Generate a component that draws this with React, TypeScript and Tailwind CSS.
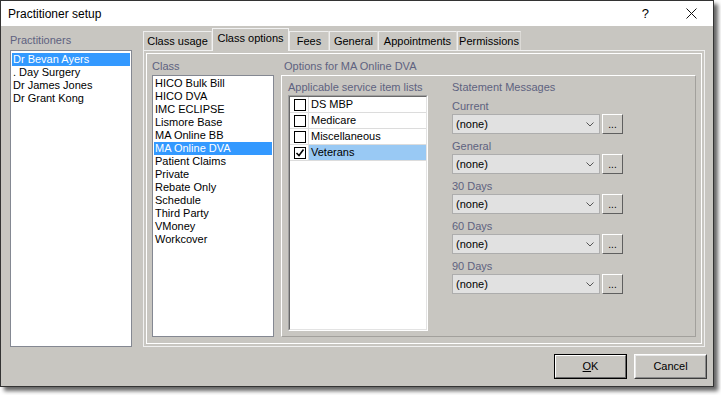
import React from 'react';

const practitioners = ['Dr Bevan Ayers', '. Day Surgery', 'Dr James Jones', 'Dr Grant Kong'];

const classes = [
  'HICO Bulk Bill',
  'HICO DVA',
  'IMC ECLIPSE',
  'Lismore Base',
  'MA Online BB',
  'MA Online DVA',
  'Patient Claims',
  'Private',
  'Rebate Only',
  'Schedule',
  'Third Party',
  'VMoney',
  'Workcover',
];

const tabs = [
  { name: 'Class usage', w: 'w-[69px]' },
  { name: 'Class options', w: 'w-[77px]' },
  { name: 'Fees', w: 'w-[40px]' },
  { name: 'General', w: 'w-[49px]' },
  { name: 'Appointments', w: 'w-[79px]' },
  { name: 'Permissions', w: 'w-[64px]' },
];

const serviceLists: { name: string; checked: boolean }[] = [
  { name: 'DS MBP', checked: false },
  { name: 'Medicare', checked: false },
  { name: 'Miscellaneous', checked: false },
  { name: 'Veterans', checked: true },
];

const messages = ['Current', 'General', '30 Days', '60 Days', '90 Days'];

const Combo: React.FC<{ label: string }> = ({ label }) => (
  <>
    <div className="h-[20px] pt-[4px] flex items-center text-[#5e6280] leading-[13px]">{label}</div>
    <div className="flex h-[20px] gap-[2px]">
      <div className="w-[148px] h-[20px] border border-[#adadad] bg-[#e1e1e1] flex items-center justify-between pl-[3px] pr-[5px] pt-[1px]">
        <span className="leading-[13px]">(none)</span>
        <svg width="8" height="5" viewBox="0 0 8 5">
          <polyline points="0.5,0.5 4,4 7.5,0.5" fill="none" stroke="#555" strokeWidth="1" />
        </svg>
      </div>
      <div className="w-[21px] h-[20px] border border-t-white border-l-white border-b-[#5f5f5f] border-r-[#5f5f5f] bg-[#cdcbc6] flex items-end justify-center pb-[3px] text-[10px] leading-[10px]">
        ...
      </div>
    </div>
  </>
);

export default function App() {
  return (
    <div className="w-[721px] h-[395px] bg-white font-['Liberation_Sans',Arial,sans-serif] text-[11px] text-black">
      <div className="w-[714px] h-[387px] border border-[#333] bg-[#c8c6c1] flex flex-col shadow-[4px_4px_4px_rgba(0,0,0,0.6)]">
        {/* title bar */}
        <div className="h-[25px] bg-white flex items-center justify-between pl-[7px] pr-[16px] shrink-0">
          <span className="text-[12px] leading-[14px]">Practitioner setup</span>
          <div className="flex items-center gap-[37px]">
            <span className="text-[13px] leading-[14px]">?</span>
            <svg width="11" height="11" viewBox="0 0 11 11">
              <path d="M0.5 0.5 L10.5 10.5 M10.5 0.5 L0.5 10.5" stroke="#111" strokeWidth="1" />
            </svg>
          </div>
        </div>

        {/* body */}
        <div className="flex">
          <div className="ml-[9px] w-[122px] flex flex-col">
            <div className="h-[24px] flex items-end pb-[3px] text-[#5e6280] leading-[13px]">Practitioners</div>
            <div className="h-[297px] border border-[#848892] bg-white p-[1px] pt-[2px]">
              {practitioners.map((p, i) => (
                <div
                  key={p}
                  className={`h-[13px] leading-[13px] pl-[1px] ${i === 0 ? 'bg-[#3399ff] text-white' : ''}`}
                >
                  {p}
                </div>
              ))}
            </div>
          </div>

          <div className="ml-[11px] w-[562px] flex flex-col">
            {/* tab strip */}
            <div className="h-[24px] flex items-end">
              {tabs.map((t, i) =>
                i === 1 ? (
                  <div
                    key={t.name}
                    className={`${t.w} h-[23px] -mb-[1px] relative z-10 border border-b-0 border-[#f2f2f2] bg-[#c8c6c1] flex items-center justify-center pb-[3px] leading-[13px]`}
                  >
                    {t.name}
                  </div>
                ) : (
                  <div
                    key={t.name}
                    className={`${t.w} h-[19px] border border-b-0 border-t-[#eeeeee] border-l-[#eeeeee] border-r-[#dcdad6] bg-[#cac8c3] flex items-center justify-center pt-[1px] leading-[13px]`}
                  >
                    {t.name}
                  </div>
                ),
              )}
            </div>

            {/* tab panel */}
            <div className="h-[297px] border border-[#f0f0f0] p-[2px]">
              <div className="h-full border border-white flex pl-[5px]">
                <div className="w-[122px] flex flex-col">
                  <div className="h-[21px] flex items-end pb-[2px] text-[#5e6280] leading-[13px]">Class</div>
                  <div className="h-[262px] border border-[#848892] bg-white p-[1px]">
                    {classes.map((c) => (
                      <div
                        key={c}
                        className={`h-[13px] leading-[13px] pl-[1px] ${c === 'MA Online DVA' ? 'bg-[#3399ff] text-white' : ''}`}
                      >
                        {c}
                      </div>
                    ))}
                  </div>
                </div>

                <div className="ml-[7px] w-[415px] flex flex-col">
                  <div className="h-[21px] flex items-end pb-[2px] pl-[3px] text-[#5e6280] leading-[13px]">
                    Options for MA Online DVA
                  </div>
                  <div className="h-[262px] border border-t-white border-l-white border-b-[#a2a09c] border-r-[#a2a09c] flex pl-[6px]">
                    <div className="w-[140px] flex flex-col">
                      <div className="h-[19px] flex items-end pb-[1px] text-[#5e6280] leading-[13px]">
                        Applicable service item lists
                      </div>
                      <div className="h-[236px] border border-t-[#a0a0a0] border-l-[#a0a0a0] border-b-white border-r-white">
                        <div className="h-full border border-t-[#696969] border-l-[#696969] border-b-[#e3e3e3] border-r-[#e3e3e3] bg-white">
                          {serviceLists.map((s) => (
                            <div key={s.name} className="h-[16px] flex border-b border-[#dcdcdc]">
                              <div className="w-[19px] border-r border-[#dcdcdc] flex items-center pl-[4px]">
                                <div className="w-[12px] h-[12px] border border-black bg-white flex items-center justify-center">
                                  {s.checked && (
                                    <svg width="10" height="10" viewBox="0 0 10 10">
                                      <polyline points="1.5,5 4,7.5 8.5,1.5" fill="none" stroke="#000" strokeWidth="1.6" />
                                    </svg>
                                  )}
                                </div>
                              </div>
                              <div
                                className={`flex-1 flex items-center pl-[2px] leading-[13px] ${s.checked ? 'bg-[#99c9f4]' : ''}`}
                              >
                                {s.name}
                              </div>
                            </div>
                          ))}
                        </div>
                      </div>
                    </div>

                    <div className="ml-[24px] flex flex-col">
                      <div className="h-[18px] flex items-end text-[#5e6280] leading-[13px]">Statement Messages</div>
                      {messages.map((m) => (
                        <Combo key={m} label={m} />
                      ))}
                    </div>
                  </div>
                </div>
              </div>
            </div>
          </div>
        </div>

        {/* buttons */}
        <div className="mt-[7px] flex justify-end gap-[7px] pr-[6px]">
          <div className="w-[73px] h-[25px] border border-black">
            <div className="h-full border border-t-white border-l-white border-b-[#696969] border-r-[#696969] flex items-center justify-center leading-[13px]">
              <span>
                <span className="underline">O</span>K
              </span>
            </div>
          </div>
          <div className="w-[73px] h-[25px] border border-t-white border-l-white border-b-[#3c3c3c] border-r-[#3c3c3c]">
            <div className="h-full border border-t-[#e8e8e8] border-l-[#e8e8e8] border-b-[#8a8a8a] border-r-[#8a8a8a] flex items-center justify-center leading-[13px]">
              Cancel
            </div>
          </div>
        </div>
      </div>
    </div>
  );
}
